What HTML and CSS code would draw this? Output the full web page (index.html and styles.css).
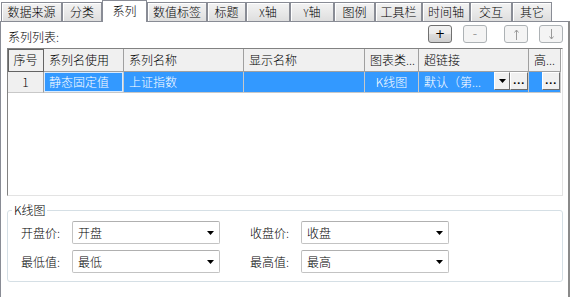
FILE: index.html
```html
<!DOCTYPE html>
<html>
<head>
  <meta charset="utf-8">
  <title>系列设置</title>
  <link rel="stylesheet" href="styles.css">
</head>
<body>
  <div class="tabs">
    <div class="tab">数据来源</div>
    <div class="tab">分类</div>
    <div class="tab active">系列</div>
    <div class="tab">数值标签</div>
    <div class="tab">标题</div>
    <div class="tab"><span class="axis">X</span>轴</div>
    <div class="tab"><span class="axis">Y</span>轴</div>
    <div class="tab">图例</div>
    <div class="tab">工具栏</div>
    <div class="tab">时间轴</div>
    <div class="tab">交互</div>
    <div class="tab">其它</div>
  </div>

  <div class="panel">
    <div class="toolbar">
      <span class="list-title">系列列表:</span>
      <div class="tool-buttons">
        <button class="tool-btn">+</button>
        <button class="tool-btn" disabled>-</button>
        <button class="tool-btn spaced" disabled>
          <svg width="7" height="11" viewBox="0 0 7 11"><path d="M3.5 1v10M1.5 3.5l2-2.5 2 2.5" fill="none" stroke="#9a9a9a" stroke-width="1"/></svg>
        </button>
        <button class="tool-btn" disabled>
          <svg width="7" height="11" viewBox="0 0 7 11"><path d="M3.5 0v10M1.5 7.5l2 2.5 2-2.5" fill="none" stroke="#9a9a9a" stroke-width="1"/></svg>
        </button>
      </div>
    </div>

    <div class="grid-box">
      <table class="series-table">
        <colgroup>
          <col class="c-index">
          <col class="c-mode">
          <col class="c-name">
          <col class="c-display">
          <col class="c-type">
          <col class="c-link">
          <col class="c-high">
        </colgroup>
        <thead>
          <tr>
            <th class="col-index">序号</th>
            <th>系列名使用</th>
            <th>系列名称</th>
            <th>显示名称</th>
            <th>图表类...</th>
            <th>超链接</th>
            <th>高...</th>
          </tr>
        </thead>
        <tbody>
          <tr>
            <td class="row-index">1</td>
            <td class="sel focus">静态固定值</td>
            <td class="sel">上证指数</td>
            <td class="sel"></td>
            <td class="sel center">K线图</td>
            <td class="sel tight">
              <div class="cell-edit">
                <span class="cell-text">默认（第...</span>
                <span class="cell-btn drop">
                  <svg width="7" height="4" viewBox="0 0 7 4"><path d="M0 0h7L3.5 4z" fill="#000"/></svg>
                </span>
                <span class="cell-btn dots">...</span>
              </div>
            </td>
            <td class="sel tight">
              <div class="cell-edit">
                <span class="cell-text"></span>
                <span class="cell-btn dots">...</span>
              </div>
            </td>
          </tr>
        </tbody>
      </table>
    </div>

    <fieldset class="group">
      <legend>K线图</legend>
      <div class="fields">
        <div class="field">
          <label>开盘价:</label>
          <div class="select"><span>开盘</span><svg width="7" height="4" viewBox="0 0 7 4"><path d="M0 0h7L3.5 4z" fill="#000"/></svg></div>
        </div>
        <div class="field">
          <label>收盘价:</label>
          <div class="select"><span>收盘</span><svg width="7" height="4" viewBox="0 0 7 4"><path d="M0 0h7L3.5 4z" fill="#000"/></svg></div>
        </div>
        <div class="field">
          <label>最低值:</label>
          <div class="select"><span>最低</span><svg width="7" height="4" viewBox="0 0 7 4"><path d="M0 0h7L3.5 4z" fill="#000"/></svg></div>
        </div>
        <div class="field">
          <label>最高值:</label>
          <div class="select"><span>最高</span><svg width="7" height="4" viewBox="0 0 7 4"><path d="M0 0h7L3.5 4z" fill="#000"/></svg></div>
        </div>
      </div>
    </fieldset>
  </div>
</body>
</html>
```

FILE: styles.css
```css
* {
  box-sizing: border-box;
}

body {
  margin: 0;
  width: 572px;
  height: 297px;
  overflow: hidden;
  background: #fff;
  font-family: "Noto Sans CJK SC", "Microsoft YaHei", sans-serif;
  font-size: 12px;
  font-weight: 300;
  color: #000;
}

/* Tab strip */
.tabs {
  display: grid;
  grid-template-columns: 61px 40px 45px 60px 39px 44px 44px 41px 47px 48px 42px 40px;
  align-items: end;
  height: 21px;
  padding-left: 1px;
}

.tab {
  height: 19px;
  border: 1px solid #898c95;
  border-bottom: none;
  background: linear-gradient(#f3f3f3, #e9e9e9 50%, #dedede);
  box-shadow: inset 1px 1px 0 #fff;
  text-align: center;
  line-height: 18px;
  white-space: nowrap;
}

.tab .axis {
  font-size: 10px;
}

.tab.active {
  position: relative;
  z-index: 1;
  height: 22px;
  margin-bottom: -1px;
  background: #fff;
  box-shadow: none;
  line-height: 19px;
}

/* Content panel */
.panel {
  width: 570px;
  height: 276px;
  border: 1px solid #898c95;
  border-right: 2px solid #8a8a8a;
  border-bottom: none;
  padding: 0 5px 0 6px;
}

.toolbar {
  display: flex;
  justify-content: space-between;
  align-items: flex-start;
  margin-top: 3px;
  height: 18px;
}

.list-title {
  margin-top: 3px;
  padding-left: 1px;
  line-height: 18px;
}

.tool-buttons {
  display: flex;
  gap: 11px;
}

.tool-btn {
  width: 24px;
  height: 18px;
  padding: 0;
  border: 1px solid #707070;
  border-radius: 3px;
  background: linear-gradient(#f2f2f2, #ebebeb 50%, #dddddd 50%, #cfcfcf);
  font-family: "DejaVu Sans", sans-serif;
  font-size: 12px;
  line-height: 14px;
  color: #000;
  display: flex;
  align-items: center;
  justify-content: center;
}

.tool-btn:disabled {
  border-color: #adb2b5;
  background: #f4f4f4;
  color: #a0a0a0;
}

.tool-btn.spaced {
  margin-left: 6px;
}

/* Series grid */
.grid-box {
  margin-top: 5px;
  height: 148px;
  border: 1px solid #e3e3e3;
  border-top-color: #828282;
  border-left-color: #828282;
}

.series-table {
  table-layout: fixed;
  width: 553px;
  border-collapse: separate;
  border-spacing: 0;
}

.c-index { width: 36px; }
.c-mode { width: 80px; }
.c-name { width: 120px; }
.c-display { width: 121px; }
.c-type { width: 54px; }
.c-link { width: 110px; }
.c-high { width: 32px; }

.series-table th,
.series-table td {
  padding: 0 0 0 5px;
  border-right: 1px solid #a0a0a0;
  border-bottom: 1px solid #a0a0a0;
  text-align: left;
  font-weight: 300;
  white-space: nowrap;
  overflow: hidden;
  line-height: 16px;
}

.series-table th {
  height: 23px;
  background: #f0f0f0;
}

.series-table th.col-index {
  text-align: center;
  padding: 0;
  border-color: #646464;
  box-shadow: inset 1px 1px 0 #646464;
}

.series-table td {
  height: 21px;
  border-bottom-color: #c8c8c8;
}

.series-table td.row-index {
  text-align: center;
  padding: 0;
  background: #f0f0f0;
}

.series-table td.sel {
  background: #3399ff;
  color: #fff;
  border-right-color: #c8c8c8;
}

.series-table td.focus {
  box-shadow: inset 0 0 0 1px #d8ebff;
}

.series-table td.center {
  text-align: center;
  padding: 0;
}

.series-table td.tight {
  padding: 0;
  vertical-align: top;
}

.cell-edit {
  display: flex;
  height: 20px;
}

.cell-text {
  flex: 1;
  padding-left: 5px;
  line-height: 20px;
  overflow: hidden;
}

.cell-btn {
  height: 18px;
  background: #f0f0f0;
  border: 1px solid;
  border-color: #fff #6d6d6d #6d6d6d #fff;
  color: #000;
  display: flex;
  align-items: center;
  justify-content: center;
}

.cell-btn.drop {
  width: 16px;
}

.cell-btn.dots {
  width: 18px;
  font-family: "DejaVu Sans", sans-serif;
  font-size: 9px;
  font-weight: bold;
  letter-spacing: 0.5px;
  line-height: 9px;
  align-items: flex-end;
  padding-bottom: 3px;
}

/* K-line group */
.group {
  margin: 7px 0 0;
  padding: 4px 13px 8px;
  border: 1px solid #d5dfe5;
  border-radius: 3px;
}

.group legend {
  margin-left: -9px;
  padding: 0 2px;
  line-height: 14px;
}

.fields {
  display: grid;
  grid-template-columns: 199px 199px;
  column-gap: 30px;
  row-gap: 6px;
}

.field {
  display: flex;
  align-items: center;
}

.field label {
  width: 51px;
  flex-shrink: 0;
}

.select {
  width: 148px;
  height: 23px;
  border: 1px solid #c3c3c3;
  border-top-color: #b0b0b0;
  border-radius: 2px;
  display: flex;
  align-items: center;
  justify-content: space-between;
  padding: 0 5px;
}
```
